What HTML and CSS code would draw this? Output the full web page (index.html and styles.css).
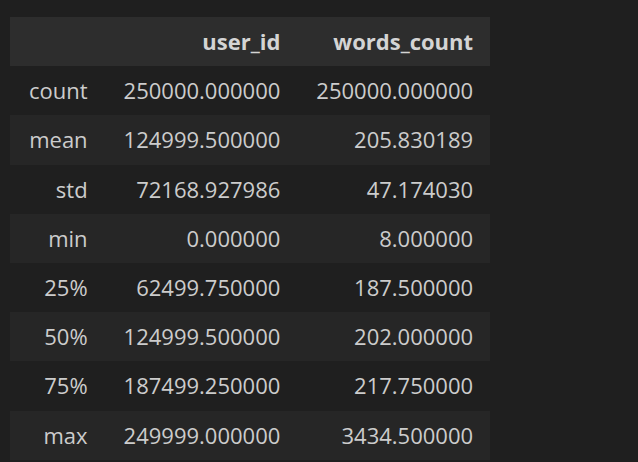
FILE: index.html
```html
<!DOCTYPE html>
<html>
<head>
<meta charset="utf-8">
<link rel="stylesheet" href="styles.css">
</head>
<body>
<table class="df">
  <thead>
    <tr><th></th><th>user_id</th><th>words_count</th></tr>
  </thead>
  <tbody>
    <tr><th>count</th><td>250000.000000</td><td>250000.000000</td></tr>
    <tr><th>mean</th><td>124999.500000</td><td>205.830189</td></tr>
    <tr><th>std</th><td>72168.927986</td><td>47.174030</td></tr>
    <tr><th>min</th><td>0.000000</td><td>8.000000</td></tr>
    <tr><th>25%</th><td>62499.750000</td><td>187.500000</td></tr>
    <tr><th>50%</th><td>124999.500000</td><td>202.000000</td></tr>
    <tr><th>75%</th><td>187499.250000</td><td>217.750000</td></tr>
    <tr><th>max</th><td>249999.000000</td><td>3434.500000</td></tr>
  </tbody>
</table>
</body>
</html>
```
FILE: styles.css
```css
html, body {
  background: #1f1f1f;
}
body {
  margin: 0;
  padding: 17px 0 0 10px;
  font-family: "Open Sans", "Noto Sans", sans-serif;
  font-size: 22px;
  color: #cccccc;
}
.df {
  border-collapse: collapse;
  border-spacing: 0;
}
.df th, .df td {
  height: 49.2px;
  box-sizing: border-box;
  padding: 0 17px 0 19px;
  text-align: right;
  white-space: nowrap;
  line-height: 49px;
}
.df thead th {
  background: #2d2d2d;
  font-weight: bold;
  color: #d4d4d4;
}
.df tbody th {
  font-weight: normal;
}
.df tbody tr:nth-child(even) {
  background: #262626;
}
```
